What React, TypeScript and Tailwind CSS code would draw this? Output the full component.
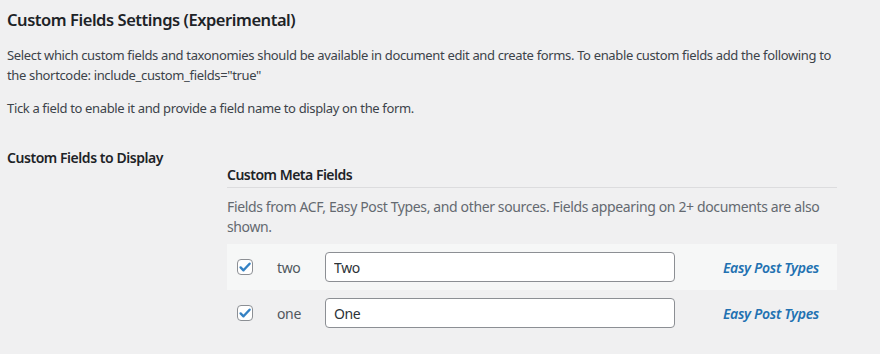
interface MetaField {
  key: string;
  label: string;
  source: string;
}

const FIELDS: MetaField[] = [
  { key: 'two', label: 'Two', source: 'Easy Post Types' },
  { key: 'one', label: 'One', source: 'Easy Post Types' },
];

function CheckBox() {
  return (
    <span className="relative h-4 w-4 rounded-[4px] border border-[#8c8f94] bg-white">
      <svg viewBox="0 0 16 16" className="absolute -left-px -top-px h-4 w-4">
        <path
          d="M3.6 8.4l2.9 2.9 6.1-6.6"
          fill="none"
          stroke="#3582c4"
          strokeWidth="2.4"
          strokeLinecap="round"
          strokeLinejoin="round"
        />
      </svg>
    </span>
  );
}

function FieldRow({ field, striped }: { field: MetaField; striped: boolean }) {
  return (
    <div
      className={`flex h-[46px] items-center pl-[10px] pr-[18px] ${striped ? 'bg-[#f6f7f7]' : ''}`}
    >
      <CheckBox />
      <span className="ml-6 w-12 text-[14px] tracking-[-0.37px] text-[#50575e]">{field.key}</span>
      <input
        readOnly
        value={field.label}
        className="h-[30px] w-[350px] rounded-[4px] border border-[#8c8f94] bg-white px-2 text-[14px] tracking-[-0.37px] text-[#2c3338] outline-none"
      />
      <a
        href="#"
        className="ml-auto text-[14px] font-semibold italic tracking-[-0.3px] text-[#2271b1]"
      >
        {field.source}
      </a>
    </div>
  );
}

export default function App() {
  return (
    <div
      className="h-[354px] w-[880px] overflow-hidden bg-[#f0f0f1] px-[7px] text-[#3c434a]"
      style={{ fontFamily: '"Noto Sans", "Open Sans", sans-serif' }}
    >
      <h2 className="pt-[9px] text-[16.5px] font-semibold leading-[22px] tracking-[-0.45px] text-[#1d2327]">
        Custom Fields Settings (Experimental)
      </h2>
      <p className="mt-[14px] w-[834px] text-[13px] leading-[20px] tracking-[-0.35px]">
        Select which custom fields and taxonomies should be available in document edit and create
        forms. To enable custom fields add the following to the shortcode:
        include_custom_fields="true"
      </p>
      <p className="mt-[13px] text-[13px] leading-[20px] tracking-[-0.35px]">
        Tick a field to enable it and provide a field name to display on the form.
      </p>

      <div className="mt-[29px] flex">
        <div className="w-[220px] pt-[1px] text-[14px] font-semibold leading-[20px] tracking-[-0.45px] text-[#1d2327]">
          Custom Fields to Display
        </div>
        <div className="w-[610px] pt-[16px]">
          <h4 className="border-b border-[#dcdcde] text-[14px] font-semibold leading-[24px] tracking-[-0.5px] text-[#1d2327]">
            Custom Meta Fields
          </h4>
          <p className="mt-[9px] text-[14px] leading-[20px] tracking-[-0.37px] text-[#646970]">
            Fields from ACF, Easy Post Types, and other sources. Fields appearing on 2+ documents are
            also shown.
          </p>
          <div className="mt-[7px]">
            {FIELDS.map((f, i) => (
              <FieldRow key={f.key} field={f} striped={i % 2 === 0} />
            ))}
          </div>
        </div>
      </div>
    </div>
  );
}
